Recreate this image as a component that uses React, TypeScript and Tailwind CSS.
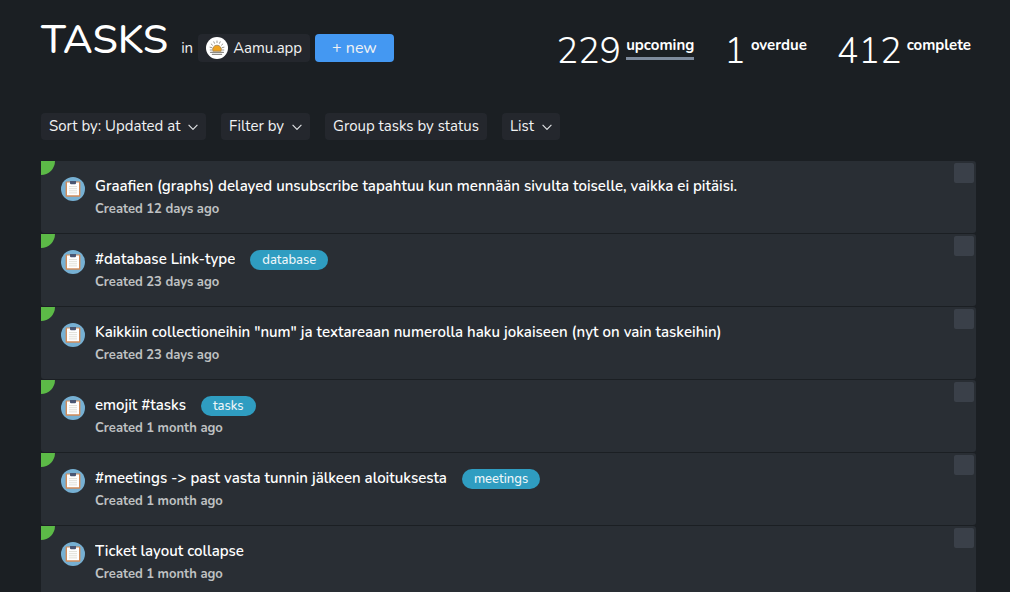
import { useState } from "react"

interface Task {
  id: number
  title: string
  created: string
  tag?: string
}

interface Stat {
  count: number
  label: string
}

const STATS: Stat[] = [
  { count: 229, label: "upcoming" },
  { count: 1, label: "overdue" },
  { count: 412, label: "complete" },
]

const TASKS: Task[] = [
  { id: 1, title: "Graafien (graphs) delayed unsubscribe tapahtuu kun mennään sivulta toiselle, vaikka ei pitäisi.", created: "12 days ago" },
  { id: 2, title: "#database Link-type", created: "23 days ago", tag: "database" },
  { id: 3, title: "Kaikkiin collectioneihin \"num\" ja textareaan numerolla haku jokaiseen (nyt on vain taskeihin)", created: "23 days ago" },
  { id: 4, title: "emojit #tasks", created: "1 month ago", tag: "tasks" },
  { id: 5, title: "#meetings -> past vasta tunnin jälkeen aloituksesta", created: "1 month ago", tag: "meetings" },
  { id: 6, title: "Ticket layout collapse", created: "1 month ago" },
]

function Chevron({ className = "" }: { className?: string }) {
  return (
    <svg viewBox="0 0 10 7" className={`h-[7px] w-[10px] ${className}`} fill="none" stroke="#e2e4e6" strokeWidth="1.1" aria-hidden="true">
      <path d="M0.6 1.8 5 6.4 9.4 1.8" />
    </svg>
  )
}

function SunLogo() {
  return (
    <svg viewBox="0 0 22 22" className="size-[22px]" aria-hidden="true">
      <circle cx="11" cy="11" r="11" fill="#fff" />
      <g stroke="#8d8a85" strokeWidth="0.9" strokeLinecap="round">
        <path d="M11 4v1.6M7.8 4.8l.7 1.5M14.2 4.8l-.7 1.5M5.2 7l1.3 1.2M16.8 7l-1.3 1.2M4 10.2l1.7.4M18 10.2l-1.7.4M4.2 13h1.4M17.8 13h-1.4" />
        <path d="M4.6 15.4h12.8M6.4 17.4h9.2" strokeWidth="1.2" />
      </g>
      <path d="M6.9 14.2a4.4 4.4 0 1 1 8.2 0z" fill="#f0a422" stroke="#9b8058" strokeWidth="0.8" />
    </svg>
  )
}

function ClipboardIcon() {
  return (
    <svg viewBox="0 0 24 24" className="size-6 shrink-0" aria-hidden="true">
      <circle cx="12" cy="12" r="12" fill="#76b0d3" />
      <rect x="4.6" y="4.5" width="14.8" height="15.3" rx="1" fill="#d18b59" />
      <path d="M6 5.5h12v12.8H6z" fill="#fff" />
      <path d="M9 4h6v2.2a1 1 0 0 1-1 1h-4a1 1 0 0 1-1-1z" fill="#4a5672" />
      <path d="M8 9.6h8M8 11.7h8M8 13.8h8M8 15.9h8" stroke="#e0dfd8" strokeWidth="1" />
    </svg>
  )
}

function TaskRow({ task }: { task: Task }) {
  return (
    <li className="relative flex h-[72px] items-start overflow-hidden rounded-[3px] rounded-tl-none bg-[#292e34] pt-4 pl-5">
      <span className="absolute top-0 left-0 size-[14px] rounded-br-full bg-[#5cba47]" />
      <ClipboardIcon />
      <div className="ml-[10px] min-w-0 flex-1">
        <div className="flex items-start gap-[15px]">
          <label htmlFor={`task-${task.id}`} className="truncate text-[15px] leading-[18px] font-semibold text-white">
            {task.title}
          </label>
          {task.tag && (
            <span className="-mb-1 rounded-full bg-[#2f9dc1] px-3 text-[13px] leading-5 font-medium text-[#eef6f9]">{task.tag}</span>
          )}
        </div>
        <p className="mt-1 text-[13px] leading-5 font-bold text-[#bfc1c2]">Created {task.created}</p>
      </div>
      <input
        id={`task-${task.id}`}
        type="checkbox"
        className="absolute top-[2px] right-[2px] size-5 appearance-none rounded-xs bg-[#3a4049] checked:bg-[#5cba47]"
      />
    </li>
  )
}

export default function App() {
  const [active, setActive] = useState<string>("upcoming")

  return (
    <main className="h-screen overflow-hidden bg-[#1b1f23] pr-[34px] pl-[41px] font-['Nunito','Lato',sans-serif] text-[15px] text-[#f1f2f3]">
      <header className="flex items-start justify-between pt-3">
        <div className="flex items-start">
          <h1 className="text-[41px] leading-[56px] font-medium text-white">TASKS</h1>
          <div className="mt-[22px] ml-[13px] flex items-center gap-[5px]">
            <span>in</span>
            <a href="#" className="flex h-7 items-center gap-[5px] rounded-sm bg-[#24272d] px-2">
              <SunLogo />
              Aamu.app
            </a>
            <button className="h-7 rounded-sm bg-[#4498f2] px-[17px] text-base">+ new</button>
          </div>
        </div>
        <div className="mt-5 flex gap-[30px] pr-[5px]">
          {STATS.map(({ count, label }) => (
            <button key={label} onClick={() => setActive(label)} className="flex items-start gap-[5px] text-white">
              <span className="text-[36px] leading-10 font-light">{count}</span>
              <span className={`border-b-3 pt-[3px] pb-[2px] leading-5 font-bold ${active === label ? "border-[#7e8b9d]" : "border-transparent"}`}>
                {label}
              </span>
            </button>
          ))}
        </div>
      </header>

      <div className="mt-[41px] flex gap-[15px]">
        <div className="relative flex items-center">
          <select aria-label="Sort by" className="h-[27px] appearance-none rounded-sm bg-[#24272d] pr-[25px] pl-2">
            <option>Sort by: Updated at</option>
          </select>
          <Chevron className="pointer-events-none absolute right-2" />
        </div>
        <button aria-haspopup="menu" className="flex h-[27px] items-center gap-2 rounded-sm bg-[#24272d] px-2">
          Filter by
          <Chevron />
        </button>
        <button className="h-[27px] rounded-sm bg-[#24272d] px-2">Group tasks by status</button>
        <div className="relative flex items-center">
          <select aria-label="View" className="h-[27px] appearance-none rounded-sm bg-[#24272d] pr-[25px] pl-2">
            <option>List</option>
          </select>
          <Chevron className="pointer-events-none absolute right-2" />
        </div>
      </div>

      <ul className="mt-[21px] flex flex-col gap-px">
        {TASKS.map((task) => (
          <TaskRow key={task.id} task={task} />
        ))}
      </ul>
    </main>
  )
}
